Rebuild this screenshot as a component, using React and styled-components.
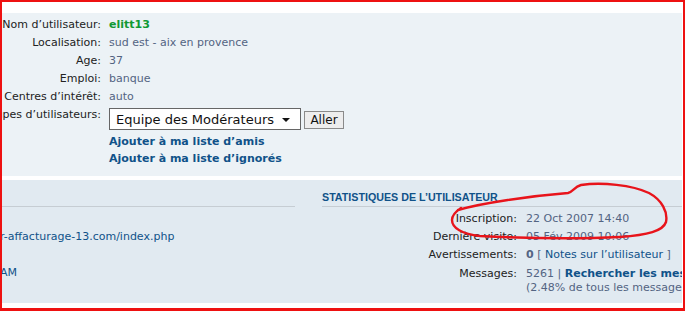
import React from "react";
import styled, { createGlobalStyle } from "styled-components";

const GlobalStyle = createGlobalStyle`
  body {
    margin: 0;
    background: #ffffff;
    font-family: "DejaVu Sans", Verdana, sans-serif;
  }
`;

const Frame = styled.div`
  position: relative;
  width: 685px;
  height: 311px;
  box-sizing: border-box;
  border: 2px solid #ee1111;
  border-bottom-width: 3px;
  padding: 11px 1px 5px 0;
  display: flex;
  flex-direction: column;
  gap: 4px;
  background: #ffffff;
`;

const Panel = styled.div`
  background: ${(p) => p.$bg};
  height: ${(p) => p.$height}px;
  overflow: hidden;
  font-size: 11px;
`;

const ProfileList = styled.div`
  padding-top: 3px;
  display: flex;
  flex-direction: column;
`;

const Row = styled.div`
  display: grid;
  grid-template-columns: ${(p) => p.$labelWidth}px max-content;
  column-gap: ${(p) => p.$gap}px;
  line-height: ${(p) => p.$line || 18}px;
  padding: ${(p) => p.$pad || 0}px 0;
  white-space: nowrap;
  margin-top: ${(p) => p.$top || 0}px;
`;

const Label = styled.div`
  display: flex;
  justify-content: flex-end;
  color: #222;
`;

const Value = styled.div`
  color: #536482;
  display: flex;
  align-items: flex-start;
  gap: 3px;
`;

const Username = styled.span`
  color: #119933;
  font-weight: bold;
`;

const SelectWrap = styled.div`
  position: relative;
  width: 192px;
  height: 22px;
  margin-top: 2px;

  &::after {
    content: "";
    position: absolute;
    right: 11px;
    top: 10px;
    border-left: 4px solid transparent;
    border-right: 4px solid transparent;
    border-top: 4px solid #111;
  }
`;

const Select = styled.select`
  appearance: none;
  width: 100%;
  height: 100%;
  box-sizing: border-box;
  border: 1px solid #666;
  background: #fff;
  color: #111;
  font-family: "DejaVu Sans", Verdana, sans-serif;
  font-size: 13px;
  padding: 0 0 0 6px;
  margin: 0;
  border-radius: 0;
`;

const Button = styled.button`
  margin-top: 5px;
  width: 40px;
  height: 18px;
  box-sizing: border-box;
  border: 1px solid #8a8a8a;
  background: #ededed;
  color: #111;
  font-family: "DejaVu Sans", Verdana, sans-serif;
  font-size: 12px;
  padding: 0;
  line-height: 16px;
`;

const Link = styled.a`
  color: #105289;
  font-weight: ${(p) => (p.$bold ? "bold" : "normal")};
  text-decoration: none;
`;

const LinkList = styled.div`
  margin: 3px 0 0 107px;
  display: flex;
  flex-direction: column;
  line-height: 17px;
`;

const Columns = styled.div`
  display: flex;
  gap: 27px;
  padding-top: 10px;
`;

const Column = styled.div`
  flex: none;
  width: ${(p) => p.$width}px;
  margin-left: ${(p) => p.$shift || 0}px;
`;

const Heading = styled.h3`
  margin: 0 0 3px;
  height: 14px;
  padding-bottom: 2px;
  border-bottom: 1px solid #c6cdd3;
  font-family: "Liberation Sans", Arial, sans-serif;
  font-size: 10.7px;
  line-height: 14px;
  font-weight: bold;
  text-transform: uppercase;
  color: #105289;
`;

const Stack = styled.div`
  display: flex;
  flex-direction: column;
`;

const Note = styled.svg`
  position: absolute;
  left: -2px;
  top: -2px;
  pointer-events: none;
`;

const profile = [
  { label: "Nom d’utilisateur:", value: <Username>elitt13</Username> },
  { label: "Localisation:", value: "sud est - aix en provence" },
  { label: "Age:", value: "37" },
  { label: "Emploi:", value: "banque" },
  { label: "Centres d’intérêt:", value: "auto" },
];

const contact = [
  { label: "Adresse e-mail:", value: "" },
  {
    label: "Site Internet:",
    value: <Link>r-affacturage-13.com/index.php</Link>,
  },
  { label: "MSNM/WLM:", value: "" },
  { label: "Yahoo:", value: <Link>AM</Link> },
];

export default function App() {
  return (
    <>
      <GlobalStyle />
      <Frame>
        <Panel $bg="#ecf2f6" $height={163}>
          <ProfileList>
            {profile.map((r) => (
              <Row key={r.label} $labelWidth={99} $gap={8}>
                <Label>{r.label}</Label>
                <Value>{r.value}</Value>
              </Row>
            ))}
            <Row $labelWidth={99} $gap={8}>
              <Label>Groupes d’utilisateurs:</Label>
              <Value>
                <SelectWrap>
                  <Select defaultValue="mod">
                    <option value="mod">Equipe des Modérateurs</option>
                  </Select>
                </SelectWrap>
                <Button>Aller</Button>
              </Value>
            </Row>
          </ProfileList>
          <LinkList>
            <Link $bold>Ajouter à ma liste d’amis</Link>
            <Link $bold>Ajouter à ma liste d’ignorés</Link>
          </LinkList>
        </Panel>

        <Panel $bg="#e1eaf1" $height={123}>
          <Columns>
            <Column $width={493} $shift={-200}>
              <Heading>Contact</Heading>
              <Stack>
                {contact.map((r) => (
                  <Row key={r.label} $labelWidth={190} $gap={8} $line={14} $pad={2}>
                    <Label>{r.label}</Label>
                    <Value>{r.value}</Value>
                  </Row>
                ))}
              </Stack>
            </Column>
            <Column $width={520}>
              <Heading>Statistiques de l’utilisateur</Heading>
              <Stack>
                <Row $labelWidth={195} $gap={9} $line={14} $pad={2}>
                  <Label>Inscription:</Label>
                  <Value>22 Oct 2007 14:40</Value>
                </Row>
                <Row $labelWidth={195} $gap={9} $line={14} $pad={2}>
                  <Label>Dernière visite:</Label>
                  <Value>05 Fév 2009 10:06</Value>
                </Row>
                <Row $labelWidth={195} $gap={9} $line={14} $pad={2}>
                  <Label>Avertissements:</Label>
                  <Value>
                    <span>
                      <b>0</b> [ <Link>Notes sur l’utilisateur</Link> ]
                    </span>
                  </Value>
                </Row>
                <Row $labelWidth={195} $gap={9} $line={14} $pad={2} $top={1}>
                  <Label>Messages:</Label>
                  <Value>
                    <span>
                      5261 | <Link $bold>Rechercher les messages de l’utilisateur</Link>
                      <br />
                      (2.48% de tous les messages / 2.55 messages par jour)
                    </span>
                  </Value>
                </Row>
              </Stack>
            </Column>
          </Columns>
        </Panel>

        <Note width="686" height="311" viewBox="0 0 686 311">
          <path
            d="M458 210 C482 203 530 196 568 193 C573 192 574 187 581 185 C602 182 632 185 649 193 C662 200 668 212 666 222 C663 231 648 235 620 237 C580 239 520 238 480 236 C462 234 452 228 452 220 C452 215 455 212 461 208"
            fill="none"
            stroke="#e8141b"
            strokeWidth="2.4"
            strokeLinecap="round"
            strokeLinejoin="round"
          />
        </Note>
      </Frame>
    </>
  );
}
